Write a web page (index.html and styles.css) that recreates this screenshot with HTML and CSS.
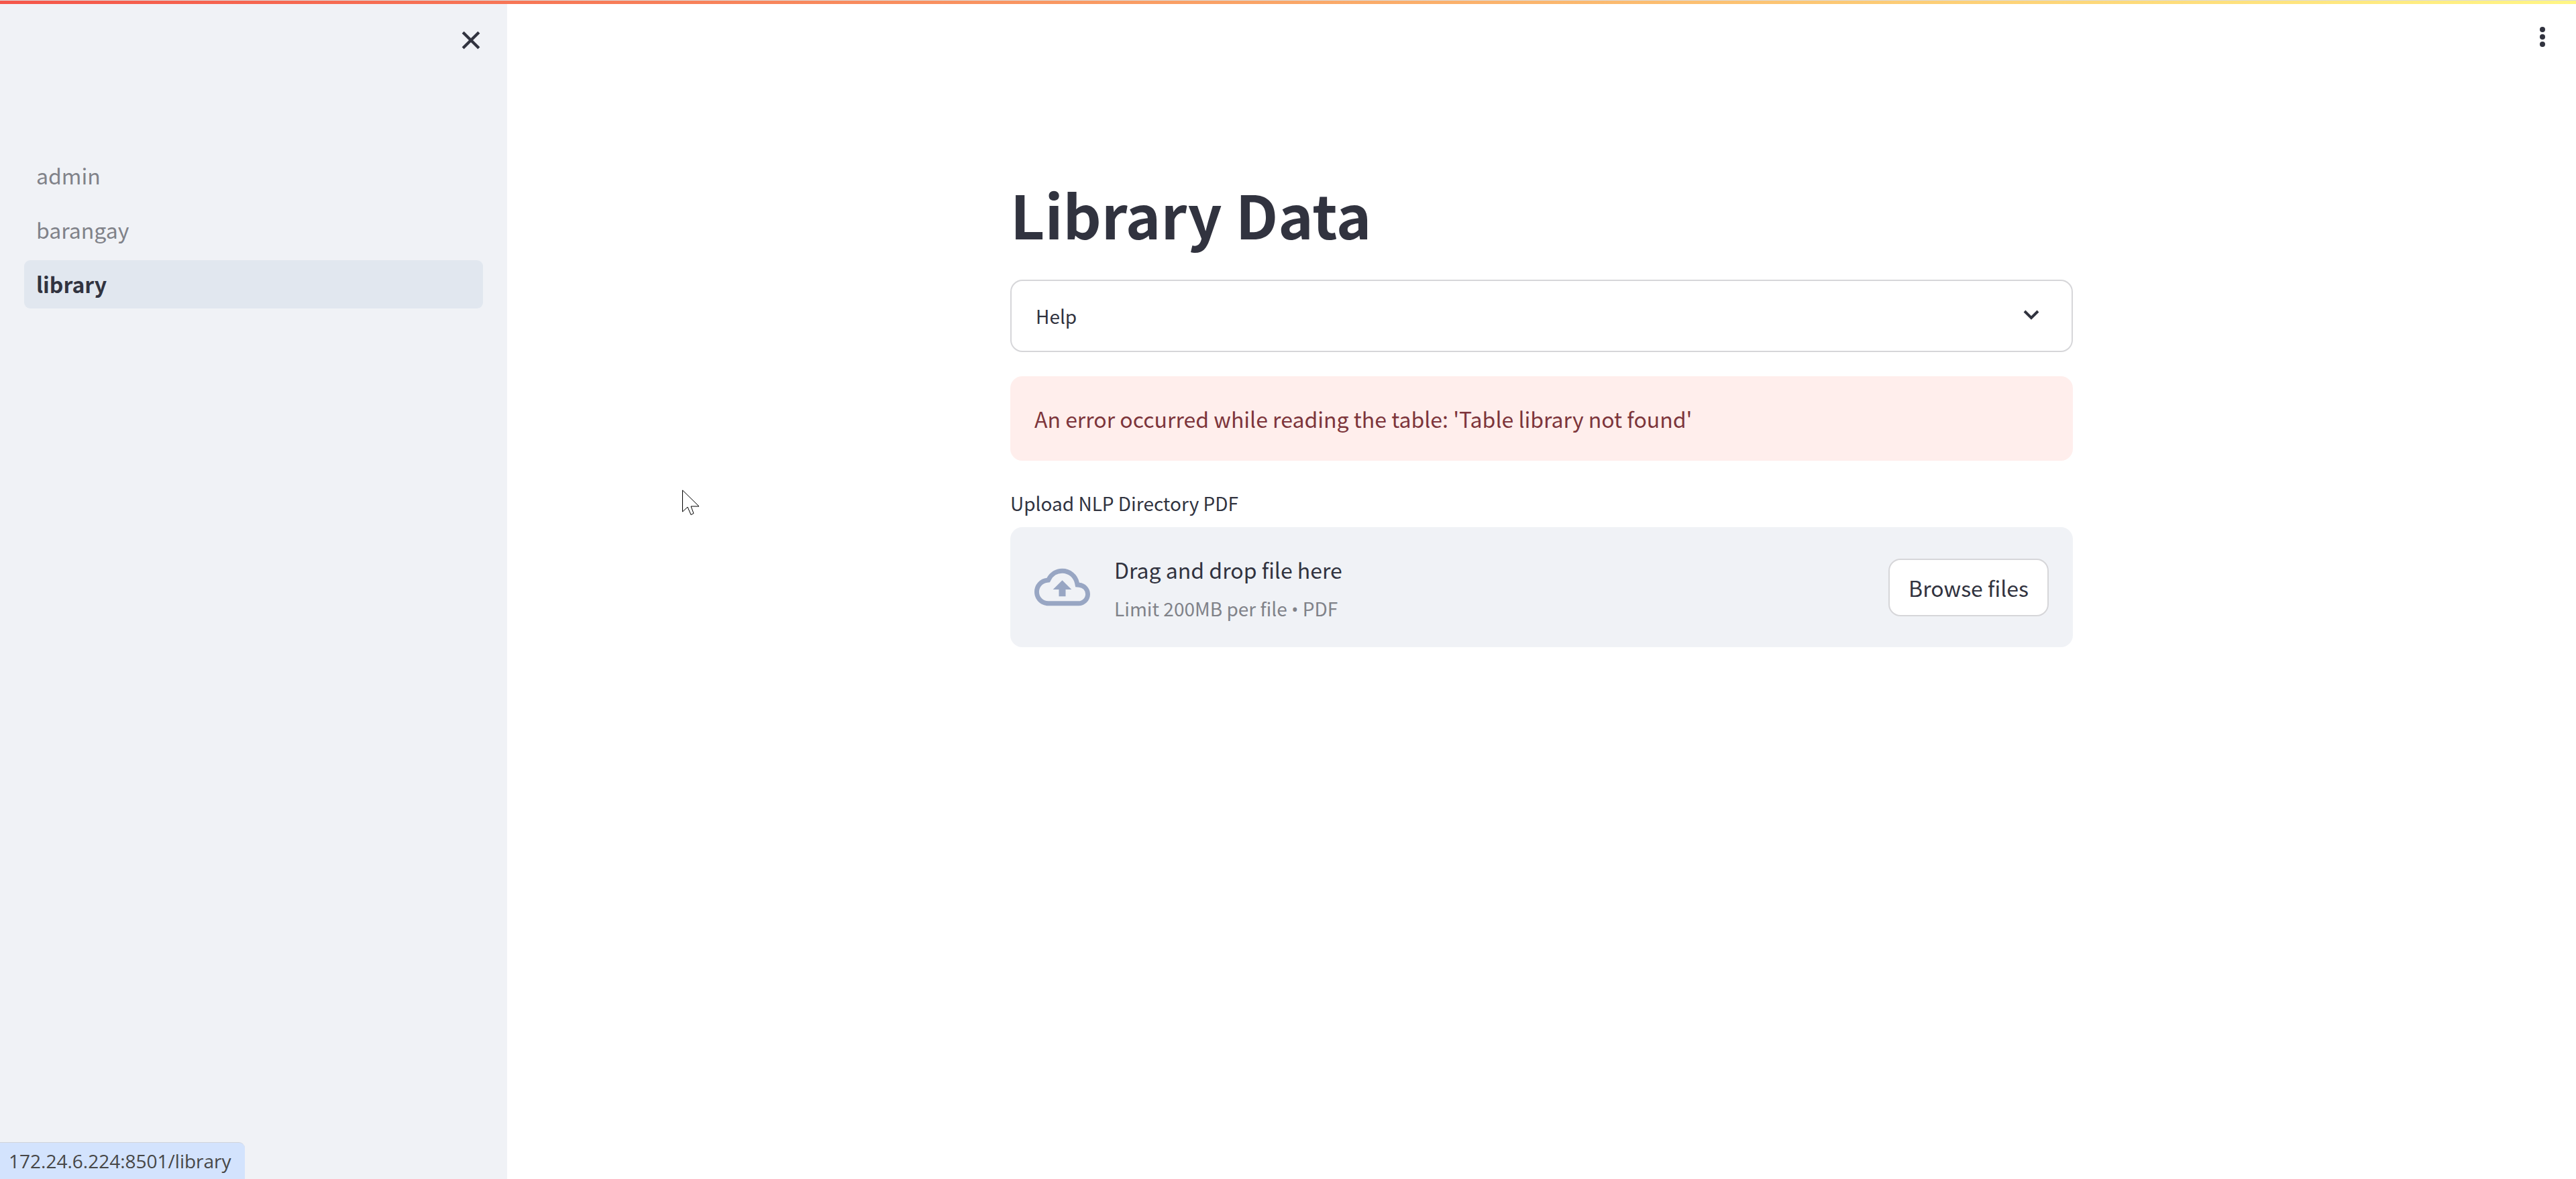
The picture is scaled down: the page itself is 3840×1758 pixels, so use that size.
FILE: index.html
```html
<!DOCTYPE html>
<html lang="en">
<head>
  <meta charset="utf-8">
  <meta name="viewport" content="width=device-width, initial-scale=1">
  <title>library</title>
  <link rel="stylesheet" href="styles.css">
</head>
<body>
  <div class="decoration"></div>
  <div class="app">
    <aside class="sidebar">
      <div class="sidebar-header">
        <button class="icon-button" type="button" aria-label="Close sidebar">
          <svg class="icon-close" viewBox="0 0 26 26" aria-hidden="true"><path d="M2 2 24 24M24 2 2 24"/></svg>
        </button>
      </div>
      <nav class="nav">
        <a class="nav-link" href="admin">admin</a>
        <a class="nav-link" href="barangay">barangay</a>
        <a class="nav-link nav-link-active" href="library" aria-current="page">library</a>
      </nav>
    </aside>
    <main class="main">
      <header class="toolbar">
        <button class="icon-button" type="button" aria-label="Main menu">
          <svg class="icon-menu" viewBox="0 0 36 36" aria-hidden="true"><circle cx="18" cy="7" r="4"/><circle cx="18" cy="18" r="4"/><circle cx="18" cy="29" r="4"/></svg>
        </button>
      </header>
      <div class="content">
        <h1 class="title">Library Data</h1>
        <details class="expander">
          <summary class="expander-summary">
            <span>Help</span>
            <svg class="icon-chevron" viewBox="0 0 24 18" aria-hidden="true"><path d="M2 2 12 12 22 2"/></svg>
          </summary>
        </details>
        <div class="alert" role="alert">An error occurred while reading the table: 'Table library not found'</div>
        <section class="uploader">
          <label class="uploader-label" for="browse">Upload NLP Directory PDF</label>
          <div class="dropzone">
            <svg class="icon-cloud" viewBox="0 0 24 24" aria-hidden="true"><path d="M19.35 10.04A7.49 7.49 0 0 0 12 4C9.11 4 6.6 5.64 5.35 8.04A5.994 5.994 0 0 0 0 14c0 3.31 2.69 6 6 6h13c2.76 0 5-2.24 5-5 0-2.64-2.05-4.78-4.65-4.96zM19 18H6c-2.21 0-4-1.79-4-4 0-2.05 1.53-3.76 3.56-3.97l1.07-.11.5-.95A5.469 5.469 0 0 1 12 6c2.62 0 4.88 1.86 5.39 4.43l.3 1.5 1.53.11A2.98 2.98 0 0 1 22 15c0 1.65-1.35 3-3 3zM8 13h2.55v3h2.9v-3H16l-4-4-4 4z"/></svg>
            <div class="dropzone-text">
              <span class="dropzone-title">Drag and drop file here</span>
              <span class="dropzone-limit">Limit 200MB per file <span class="bullet">•</span> PDF</span>
            </div>
            <button class="browse" id="browse" type="button">Browse files</button>
          </div>
        </section>
      </div>
    </main>
  </div>
  <div class="link-status">172.24.6.224:8501/library</div>
  <svg class="pointer" viewBox="0 0 26 40" aria-hidden="true"><path d="M.5 1v32l7.500-7 5 11.500 4-2L13 25h12z"/></svg>
</body>
</html>
```
FILE: styles.css
```css
* {
  box-sizing: border-box;
}

body {
  margin: 0;
  background: #fff;
  color: #31333f;
  font-family: "Noto Sans CJK SC", "Noto Sans", sans-serif;
  font-size: 32px;
  line-height: 54px;
}

button {
  font: inherit;
  color: inherit;
  cursor: pointer;
}

svg {
  display: block;
}

.decoration {
  position: absolute;
  inset: 0 0 auto;
  height: 6px;
  border-top: 1px solid #dcdcdc;
  background: linear-gradient(90deg, #f5564a, #fff685);
}

.app {
  display: flex;
  min-height: 100vh;
}

.sidebar {
  flex: none;
  width: 756px;
  padding: 36px;
  background: #f0f2f6;
}

.sidebar-header {
  display: flex;
  justify-content: flex-end;
  height: 190px;
}

.icon-button {
  display: grid;
  place-items: center;
  width: 48px;
  height: 48px;
  padding: 0;
  border: 0;
  background: none;
}

.sidebar-header .icon-button {
  margin-right: -6px;
}

.icon-close {
  width: 28px;
  height: 28px;
  fill: none;
  stroke: #31333f;
  stroke-width: 4;
}

.nav {
  display: flex;
  flex-direction: column;
  gap: 9px;
}

.nav-link {
  height: 72px;
  padding: 8px 18px;
  border-radius: 9px;
  color: #808289;
  text-decoration: none;
}

.nav-link-active {
  background: #e1e7ef;
  color: #31333f;
  font-weight: 600;
}

.main {
  flex: 1;
}

.toolbar {
  display: flex;
  justify-content: flex-end;
  padding: 31px 26px;
}

.icon-menu {
  width: 36px;
  height: 36px;
  fill: #31333f;
}

.content {
  display: flex;
  flex-direction: column;
  gap: 36px;
  width: 100%;
  max-width: 1584px;
  margin: 0 auto;
  padding: 152px 0 72px;
}

.title {
  margin: 0;
  padding-bottom: 6px;
  font-size: 89px;
  font-weight: 700;
  line-height: 113px;
}

.expander {
  border: 2px solid #d6d6d9;
  border-radius: 18px;
}

.expander-summary {
  display: flex;
  align-items: center;
  justify-content: space-between;
  padding: 25px 48px 25px 36px;
  font-size: 28px;
  list-style: none;
  cursor: pointer;
}

.icon-chevron {
  width: 24px;
  height: 18px;
  fill: none;
  stroke: #31333f;
  stroke-width: 4;
}

.alert {
  padding: 36px;
  border-radius: 18px;
  background: #ffeeec;
  color: #7d353b;
}

.uploader {
  display: flex;
  flex-direction: column;
  gap: 9px;
}

.uploader-label {
  font-size: 28px;
}

.dropzone {
  display: flex;
  align-items: center;
  gap: 36px;
  padding: 30px 36px;
  border-radius: 18px;
  background: #f0f2f6;
}

.icon-cloud {
  width: 83px;
  height: 83px;
  fill: #98a6c3;
}

.dropzone-text {
  display: flex;
  flex: 1;
  flex-direction: column;
  gap: 4px;
  padding-top: 6px;
}

.dropzone-limit {
  color: #808289;
  font-size: 28px;
}

.bullet {
  font-family: "Open Sans", "Noto Sans", sans-serif;
}

.browse {
  height: 86px;
  padding: 0 28px;
  border: 2px solid #d6d6d9;
  border-radius: 18px;
  background: #fff;
}

.link-status {
  position: fixed;
  bottom: 0;
  left: 0;
  padding: 0 20px 0 13px;
  border-top: 1px solid #d0d4da;
  border-top-right-radius: 9px;
  background: #d3e3fd;
  color: #474747;
  font-family: "Open Sans", "Noto Sans", sans-serif;
  font-size: 28px;
}

.pointer {
  position: absolute;
  top: 730px;
  left: 1017px;
  width: 26px;
  height: 40px;
  fill: #fff;
  stroke: #000;
  stroke-width: 1;
}
```
